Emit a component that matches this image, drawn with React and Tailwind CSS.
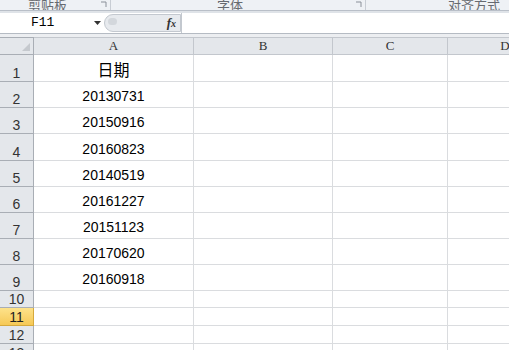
import React from "react";

const rows = [
  { n: 1, h: "h-[27px]", a: "日期", head: true },
  { n: 2, h: "h-[26px]", a: "20130731" },
  { n: 3, h: "h-[26px]", a: "20150916" },
  { n: 4, h: "h-[27px]", a: "20160823" },
  { n: 5, h: "h-[26px]", a: "20140519" },
  { n: 6, h: "h-[26px]", a: "20161227" },
  { n: 7, h: "h-[26px]", a: "20151123" },
  { n: 8, h: "h-[26px]", a: "20170620" },
  { n: 9, h: "h-[26px]", a: "20160918" },
  { n: 10, h: "h-[17px]", a: "" },
  { n: 11, h: "h-[18px]", a: "", sel: true },
  { n: 12, h: "h-[18px]", a: "" },
  { n: 13, h: "h-[18px]", a: "" },
];

function Launcher() {
  return (
    <svg width="7" height="7" viewBox="0 0 7 7" className="mb-[2px]">
      <path d="M1 1h5v5" fill="none" stroke="#8a9099" strokeWidth="1" />
    </svg>
  );
}

export default function App() {
  return (
    <div className="w-[509px] h-[350px] overflow-hidden bg-white font-['Liberation_Sans','Noto_Sans_CJK_SC',sans-serif]">
      {/* ribbon group labels, cut off at the top */}
      <div className="flex h-[10px] overflow-hidden bg-[#eef1f5] text-[13px] text-[#666a70]">
        <div className="flex w-[111px] items-end justify-end border-r border-[#c8cdd4] pr-[3px]">
          <span className="mr-auto ml-[28px] -mb-[4px] font-['Noto_Sans_CJK_SC',sans-serif]">剪贴板</span>
          <Launcher />
        </div>
        <div className="flex w-[255px] items-end justify-end border-r border-[#c8cdd4] pr-[3px]">
          <span className="mr-auto ml-[106px] -mb-[4px] font-['Noto_Sans_CJK_SC',sans-serif]">字体</span>
          <Launcher />
        </div>
        <div className="flex flex-1 items-end">
          <span className="ml-[82px] -mb-[4px] font-['Noto_Sans_CJK_SC',sans-serif]">对齐方式</span>
        </div>
      </div>
      <div className="h-[3px] border-t border-[#b9bfc8] bg-[#dfe3e8]" />

      {/* formula bar */}
      <div className="flex h-[21px] border-b border-[#b5bbc3] bg-white">
        <div className="relative flex w-[104px] items-center">
          <span className="ml-[31px] font-['Liberation_Mono','DejaVu_Sans_Mono',monospace] text-[13px] text-black">F11</span>
          <svg width="7" height="4" viewBox="0 0 7 4" className="absolute left-[94px] top-[8px]">
            <path d="M0 0h7L3.5 4z" fill="#333" />
          </svg>
        </div>
        <div className="relative my-[1px] flex w-[77px] items-center justify-end rounded-l-full border border-[#c3c8cf] bg-[#e7eaee] pr-[4px]">
          <span className="absolute left-[3px] top-[3px] h-[7px] w-[9px] rounded-full bg-[#d3d7dc]" />
          <span className="font-['Liberation_Serif',serif] text-[13px] font-bold italic text-[#333]">
            f<span className="text-[10px]">x</span>
          </span>
        </div>
        <div className="flex-1 border-l border-[#c3c8cf] bg-white" />
      </div>
      <div className="h-[3px] bg-[#eceef1]" />

      {/* sheet */}
      <div className="grid grid-cols-[34px_160px_139px_115px_115px] text-black">
        <div className="relative h-[18px] border-r border-b border-t border-[#a9aeb5] bg-[#e4e7eb]">
          <svg width="8" height="8" viewBox="0 0 8 8" className="absolute right-[3px] bottom-[3px]">
            <path d="M8 0v8H0z" fill="#c5c9ce" />
          </svg>
        </div>
        {["A", "B", "C", "D"].map((c) => (
          <div
            key={c}
            className="flex h-[18px] items-center justify-center border-t border-r border-b border-[#c3c7cd] bg-[#e4e7eb] font-['Liberation_Serif',serif] text-[13px] text-[#333]"
          >
            {c}
          </div>
        ))}
        {rows.map((r) => (
          <React.Fragment key={r.n}>
            <div
              className={
                r.sel
                  ? `${r.h} flex items-end justify-center border-r border-b border-[#d6a93c] bg-gradient-to-b from-[#fde28a] to-[#f6c955] pb-[1px] text-[14px] leading-none text-[#222]`
                  : `${r.h} flex items-end justify-center border-r border-b border-[#a9aeb5] bg-[#e4e7eb] pb-[1px] text-[14px] leading-none text-[#333]`
              }
            >
              {r.n}
            </div>
            <div
              className={`${r.h} flex items-end justify-center border-r border-b border-[#dadcdf] pb-[4px] leading-none ${
                r.head ? "font-['Noto_Sans_CJK_SC',sans-serif] text-[16px] pb-[2px]" : "text-[14px]"
              }`}
            >
              {r.a}
            </div>
            <div className={`${r.h} border-r border-b border-[#dadcdf]`} />
            <div className={`${r.h} border-r border-b border-[#dadcdf]`} />
            <div className={`${r.h} border-b border-[#dadcdf]`} />
          </React.Fragment>
        ))}
      </div>
    </div>
  );
}
